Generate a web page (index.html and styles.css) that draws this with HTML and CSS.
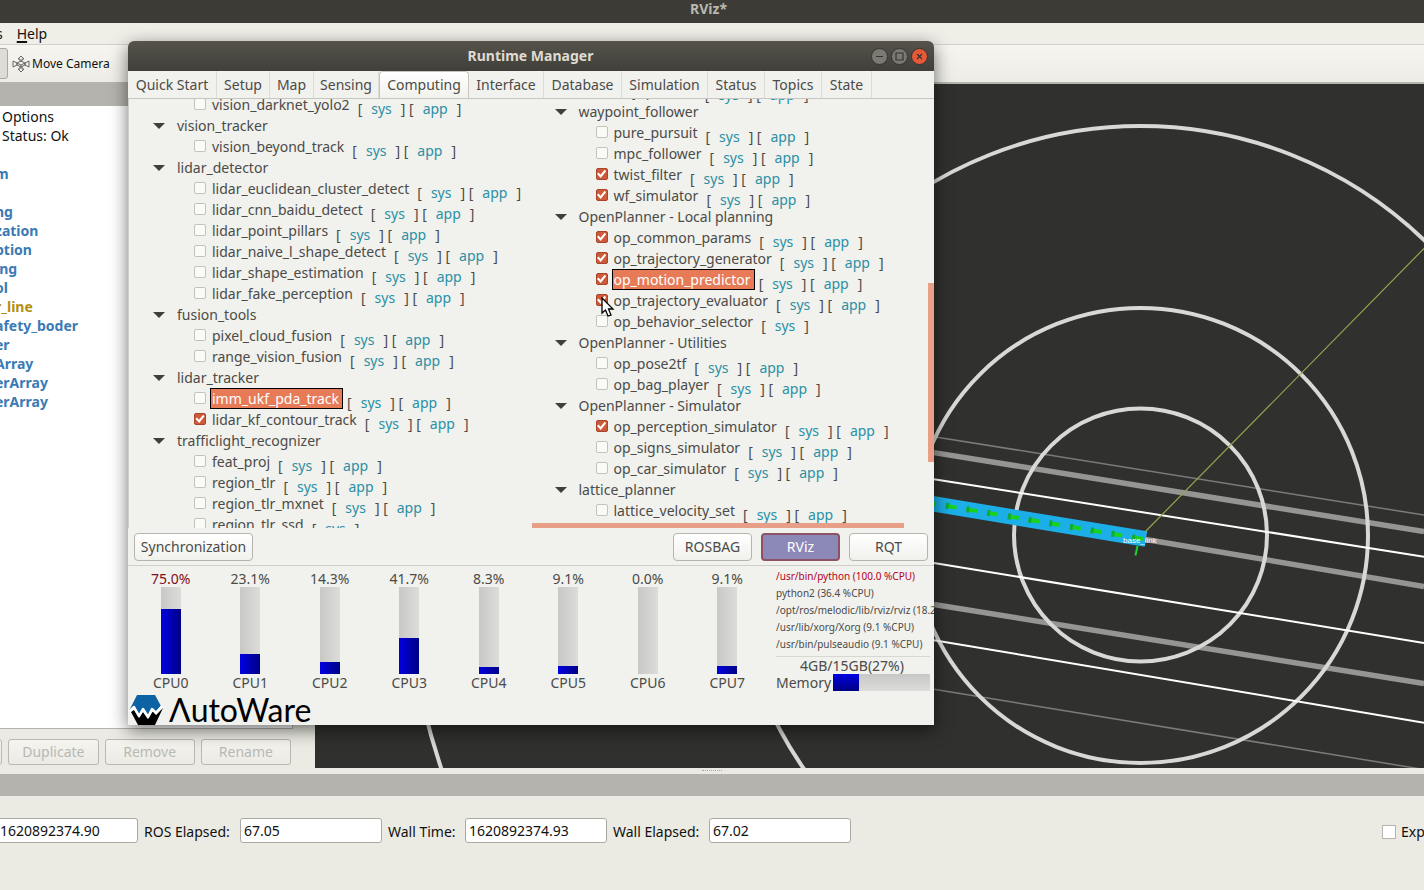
FILE: index.html
```html
<!DOCTYPE html>
<html lang="en">
<head>
<meta charset="utf-8">
<title>RViz*</title>
<link rel="stylesheet" href="styles.css">
</head>
<body>
<header class="desktop-title">RViz*</header>
<nav class="menubar"><a href="#panels">s</a><a href="#help"><u>H</u>elp</a></nav>
<div class="toolbar">
  <button class="tool-active" aria-label="Interact"></button>
  <button class="tool">
    <svg width="18" height="18" viewBox="0 0 18 18" fill="none" stroke="#666" stroke-width="1"><path d="M9 1L6 4H8V6H10V4H12ZM9 17L6 14H8V12H10V14H12ZM1 6V12L5 10V8ZM17 6V12L13 10V8ZM5 8L9 6L13 8V10L9 12L5 10ZM5 8L9 10L13 8M9 10V12"/></svg>
    Move Camera
  </button>
</div>
<main class="workspace">
  <section class="displays">
    <div class="dock-title"></div>
    <ul class="display-list">
      <li class="plain">Options</li>
      <li class="plain">Status: Ok</li>
      <li></li>
      <li>m</li>
      <li></li>
      <li>ng</li>
      <li>zation</li>
      <li>ption</li>
      <li>ing</li>
      <li>ol</li>
      <li class="warn">r_line</li>
      <li>afety_boder</li>
      <li>er</li>
      <li>Array</li>
      <li>erArray</li>
      <li>erArray</li>
    </ul>
    <div class="display-buttons">
      <button disabled aria-label="Add"></button>
      <button disabled>Duplicate</button>
      <button disabled>Remove</button>
      <button disabled>Rename</button>
    </div>
  </section>
  <section class="view3d">
    <svg width="100%" height="100%" role="img" aria-label="3D view">
      <g transform="translate(-315 -84)" fill="none">
        <g stroke="#7b7b7a" stroke-width="1.5">
          <path d="M934 436.7L1424 515M934 689.3L1424 769.5"/>
        </g>
        <g stroke="#959593" stroke-width="5.5">
          <path d="M934 452.6L1424 531.6M1140 538.5L1424 586.5M934 604.5L1424 683.5"/>
        </g>
        <g stroke="#d8d8d5" stroke-width="4">
          <circle cx="1140.5" cy="535" r="126.5"/>
          <circle cx="1140.5" cy="535.5" r="227.5"/>
          <circle cx="1140.5" cy="535.5" r="409.5"/>
          <circle cx="1140.5" cy="535.5" r="737"/>
        </g>
        <g stroke="#fff" stroke-width="2">
          <path d="M934 479.3L1424 556.7M934 563L1424 643M934 640.2L1424 722.7"/>
        </g>
        <path d="M926 502.7L1146 539" stroke="#1caee6" stroke-width="15.5"/>
        <path d="M1145 532L1424 248.5" stroke="#9ca250" stroke-width="1.2"/>
        <path d="M926 502.5L1146 539.5" stroke="#18d21c" stroke-width="4" stroke-dasharray="11 10" stroke-dashoffset="1"/>
        <path d="M926 502.5L1146 539.5" stroke="#12a83a" stroke-width="6" stroke-dasharray="3 18" stroke-dashoffset="1"/>
        <path d="M1137.500 546L1135.500 555.500" stroke="#19d52d" stroke-width="2"/>
        <text x="1123" y="543" class="frame-name">base_link</text>
      </g>
    </svg>
  </section>
</main>
<div class="splitter"><i></i></div>
<div class="dock-title"></div>
<footer class="times">
  <input id="ros-time" aria-label="ROS Time" value="1620892374.90">
  <label for="ros-el">ROS Elapsed:</label><input id="ros-el" value="67.05">
  <label for="wall">Wall Time:</label><input id="wall" value="1620892374.93">
  <label for="wall-el">Wall Elapsed:</label><input id="wall-el" value="67.02">
  <label class="experimental"><input type="checkbox">Exp</label>
</footer>

<section class="window">
  <header class="window-title">
    <h1>Runtime Manager</h1>
    <div class="controls">
      <button aria-label="Minimize"><svg viewBox="0 0 15 15"><path d="M4 7.500H11"/></svg></button>
      <button aria-label="Maximize"><svg viewBox="0 0 15 15"><path d="M4 4H11V11H4Z"/></svg></button>
      <button class="close" aria-label="Close"><svg viewBox="0 0 15 15"><path d="M5 5L10 10M10 5L5 10"/></svg></button>
    </div>
  </header>
  <nav class="tabs">
    <button>Quick Start</button><button>Setup</button><button>Map</button><button>Sensing</button><button class="current">Computing</button><button>Interface</button><button>Database</button><button>Simulation</button><button>Status</button><button>Topics</button><button>State</button>
  </nav>
  <div class="panes">
    <ul class="tree tree-left">
      <li><label><input type="checkbox"><span>vision_darknet_yolo2</span></label><span class="links">[<a href="#sys">sys</a>]&nbsp;[<a href="#app">app</a>]</span></li>
      <li class="group">vision_tracker</li>
      <li><label><input type="checkbox"><span>vision_beyond_track</span></label><span class="links">[<a href="#sys">sys</a>]&nbsp;[<a href="#app">app</a>]</span></li>
      <li class="group">lidar_detector</li>
      <li><label><input type="checkbox"><span>lidar_euclidean_cluster_detect</span></label><span class="links">[<a href="#sys">sys</a>]&nbsp;[<a href="#app">app</a>]</span></li>
      <li><label><input type="checkbox"><span>lidar_cnn_baidu_detect</span></label><span class="links">[<a href="#sys">sys</a>]&nbsp;[<a href="#app">app</a>]</span></li>
      <li><label><input type="checkbox"><span>lidar_point_pillars</span></label><span class="links">[<a href="#sys">sys</a>]&nbsp;[<a href="#app">app</a>]</span></li>
      <li><label><input type="checkbox"><span>lidar_naive_l_shape_detect</span></label><span class="links">[<a href="#sys">sys</a>]&nbsp;[<a href="#app">app</a>]</span></li>
      <li><label><input type="checkbox"><span>lidar_shape_estimation</span></label><span class="links">[<a href="#sys">sys</a>]&nbsp;[<a href="#app">app</a>]</span></li>
      <li><label><input type="checkbox"><span>lidar_fake_perception</span></label><span class="links">[<a href="#sys">sys</a>]&nbsp;[<a href="#app">app</a>]</span></li>
      <li class="group">fusion_tools</li>
      <li><label><input type="checkbox"><span>pixel_cloud_fusion</span></label><span class="links">[<a href="#sys">sys</a>]&nbsp;[<a href="#app">app</a>]</span></li>
      <li><label><input type="checkbox"><span>range_vision_fusion</span></label><span class="links">[<a href="#sys">sys</a>]&nbsp;[<a href="#app">app</a>]</span></li>
      <li class="group">lidar_tracker</li>
      <li><label><input type="checkbox"><span class="marked">imm_ukf_pda_track</span></label><span class="links">[<a href="#sys">sys</a>]&nbsp;[<a href="#app">app</a>]</span></li>
      <li><label><input type="checkbox" checked><span>lidar_kf_contour_track</span></label><span class="links">[<a href="#sys">sys</a>]&nbsp;[<a href="#app">app</a>]</span></li>
      <li class="group">trafficlight_recognizer</li>
      <li><label><input type="checkbox"><span>feat_proj</span></label><span class="links">[<a href="#sys">sys</a>]&nbsp;[<a href="#app">app</a>]</span></li>
      <li><label><input type="checkbox"><span>region_tlr</span></label><span class="links">[<a href="#sys">sys</a>]&nbsp;[<a href="#app">app</a>]</span></li>
      <li><label><input type="checkbox"><span>region_tlr_mxnet</span></label><span class="links">[<a href="#sys">sys</a>]&nbsp;[<a href="#app">app</a>]</span></li>
      <li><label><input type="checkbox"><span>region_tlr_ssd</span></label><span class="links">[<a href="#sys">sys</a>]</span></li>
    </ul>
    <ul class="tree tree-right">
      <li><label><input type="checkbox"><span>way_planner</span></label><span class="links">[<a href="#sys">sys</a>]&nbsp;[<a href="#app">app</a>]</span></li>
      <li class="group">waypoint_follower</li>
      <li><label><input type="checkbox"><span>pure_pursuit</span></label><span class="links">[<a href="#sys">sys</a>]&nbsp;[<a href="#app">app</a>]</span></li>
      <li><label><input type="checkbox"><span>mpc_follower</span></label><span class="links">[<a href="#sys">sys</a>]&nbsp;[<a href="#app">app</a>]</span></li>
      <li><label><input type="checkbox" checked><span>twist_filter</span></label><span class="links">[<a href="#sys">sys</a>]&nbsp;[<a href="#app">app</a>]</span></li>
      <li><label><input type="checkbox" checked><span>wf_simulator</span></label><span class="links">[<a href="#sys">sys</a>]&nbsp;[<a href="#app">app</a>]</span></li>
      <li class="group">OpenPlanner - Local planning</li>
      <li><label><input type="checkbox" checked><span>op_common_params</span></label><span class="links">[<a href="#sys">sys</a>]&nbsp;[<a href="#app">app</a>]</span></li>
      <li><label><input type="checkbox" checked><span>op_trajectory_generator</span></label><span class="links">[<a href="#sys">sys</a>]&nbsp;[<a href="#app">app</a>]</span></li>
      <li><label><input type="checkbox" checked><span class="marked">op_motion_predictor</span></label><span class="links">[<a href="#sys">sys</a>]&nbsp;[<a href="#app">app</a>]</span></li>
      <li><label><input type="checkbox" checked><span>op_trajectory_evaluator</span></label><span class="links">[<a href="#sys">sys</a>]&nbsp;[<a href="#app">app</a>]</span></li>
      <li><label><input type="checkbox"><span>op_behavior_selector</span></label><span class="links">[<a href="#sys">sys</a>]</span></li>
      <li class="group">OpenPlanner - Utilities</li>
      <li><label><input type="checkbox"><span>op_pose2tf</span></label><span class="links">[<a href="#sys">sys</a>]&nbsp;[<a href="#app">app</a>]</span></li>
      <li><label><input type="checkbox"><span>op_bag_player</span></label><span class="links">[<a href="#sys">sys</a>]&nbsp;[<a href="#app">app</a>]</span></li>
      <li class="group">OpenPlanner - Simulator</li>
      <li><label><input type="checkbox" checked><span>op_perception_simulator</span></label><span class="links">[<a href="#sys">sys</a>]&nbsp;[<a href="#app">app</a>]</span></li>
      <li><label><input type="checkbox"><span>op_signs_simulator</span></label><span class="links">[<a href="#sys">sys</a>]&nbsp;[<a href="#app">app</a>]</span></li>
      <li><label><input type="checkbox"><span>op_car_simulator</span></label><span class="links">[<a href="#sys">sys</a>]&nbsp;[<a href="#app">app</a>]</span></li>
      <li class="group">lattice_planner</li>
      <li><label><input type="checkbox"><span>lattice_velocity_set</span></label><span class="links">[<a href="#sys">sys</a>]&nbsp;[<a href="#app">app</a>]</span></li>
    </ul>
    <i class="scroll-y"></i><i class="scroll-x"></i>
  </div>
  <div class="actions">
    <button class="sync">Synchronization</button>
    <button>ROSBAG</button><button class="pressed">RViz</button><button>RQT</button>
  </div>
  <div class="status">
    <div class="cpus">
      <div class="cpu hot"><b>75.0%</b><div class="bar"><i style="height:75%"></i></div><span>CPU0</span></div>
      <div class="cpu"><b>23.1%</b><div class="bar"><i style="height:23.1%"></i></div><span>CPU1</span></div>
      <div class="cpu"><b>14.3%</b><div class="bar"><i style="height:14.3%"></i></div><span>CPU2</span></div>
      <div class="cpu"><b>41.7%</b><div class="bar"><i style="height:41.7%"></i></div><span>CPU3</span></div>
      <div class="cpu"><b>8.3%</b><div class="bar"><i style="height:8.3%"></i></div><span>CPU4</span></div>
      <div class="cpu"><b>9.1%</b><div class="bar"><i style="height:9.1%"></i></div><span>CPU5</span></div>
      <div class="cpu"><b>0.0%</b><div class="bar"><i style="height:0%"></i></div><span>CPU6</span></div>
      <div class="cpu"><b>9.1%</b><div class="bar"><i style="height:9.1%"></i></div><span>CPU7</span></div>
    </div>
    <div class="usage">
      <ul>
        <li class="alert">/usr/bin/python (100.0 %CPU)</li>
        <li>python2 (36.4 %CPU)</li>
        <li>/opt/ros/melodic/lib/rviz/rviz (18.2 %CPU)</li>
        <li>/usr/lib/xorg/Xorg (9.1 %CPU)</li>
        <li>/usr/bin/pulseaudio (9.1 %CPU)</li>
      </ul>
      <p>4GB/15GB(27%)</p>
      <div class="memory"><span>Memory</span><div><i style="width:27%"></i></div></div>
    </div>
  </div>
  <div class="brand">
    <svg width="36" height="30" viewBox="0 0 36 30">
      <path d="M9 0H27L33 11L27 17L24 14L20 20L15 14L11 20L6 12L1 16Z" fill="#0c62a3"/>
      <path d="M3 17L6 15L11 23L15 17L20 24L25 16L28 20L35 13L27 30H10Z" fill="#000"/>
      <path d="M1 17L6 12L11 21L15 14L20 22L24 14L28 18L34 11" fill="none" stroke="#fff" stroke-width="2.500" stroke-linejoin="round"/>
    </svg>
    <strong aria-label="AutoWare">ΛutoWare</strong>
  </div>
</section>
<svg class="pointer" width="14" height="21" viewBox="0 0 14 21"><path d="M1 1V16L4.500 13L7 19L10 18L7.500 12H12Z" fill="#fff" stroke="#000" stroke-width="1.300"/></svg>
</body>
</html>
```
FILE: styles.css
```css
* { box-sizing: border-box; }
body {
  margin: 0;
  height: 100vh;
  display: flex;
  flex-direction: column;
  overflow: hidden;
  position: relative;
  background: #ebebe3;
  color: #111;
  font: 14px/20px "Noto Sans", "Open Sans", sans-serif;
}
button, input { font: inherit; color: inherit; margin: 0; }
a { color: inherit; text-decoration: none; }
ul { list-style: none; margin: 0; padding: 0; }
i { display: block; }

.desktop-title {
  height: 23px;
  line-height: 18px;
  flex: none;
  padding-right: 7px;
  text-align: center;
  font-weight: 700;
  font-size: 14px;
  background: #3c3b36;
  color: #b9b7ae;
}
.menubar {
  height: 22px;
  line-height: 21px;
  flex: none;
  display: flex;
  gap: 14px;
  margin-left: -4px;
  border-bottom: 1px solid #d2d1c9;
  background: #efeee7;
}
.menubar u { text-decoration-thickness: 2px; text-underline-offset: 2px; }
.toolbar {
  height: 39px;
  flex: none;
  display: flex;
  align-items: center;
  background: linear-gradient(#f6f5f0, #edece5);
  border-bottom: 2px solid #b5b4ad;
}
.tool-active {
  width: 12px;
  height: 31px;
  margin-left: -6px;
  border: 1px solid #aaa9a2;
  border-radius: 3px;
  background: #dddcd5;
}
.tool {
  display: flex;
  align-items: center;
  gap: 2px;
  padding: 0 4px;
  border: 0;
  background: none;
  font-size: 12px;
}
.workspace { flex: 1; min-height: 0; display: flex; }
.displays { width: 315px; flex: none; display: flex; flex-direction: column; }
.dock-title { height: 22px; flex: none; background: #b4b3ad; }
.display-list {
  flex: 1;
  margin-right: 22px;
  padding-top: 1px;
  overflow: hidden;
  background: #fff;
  border: solid #b4b3ad;
  border-width: 0 1px 1px 0;
  color: #3a7ab5;
  font-weight: 700;
}
.display-list li { height: 19px; line-height: 19px; margin-left: -5px; }
.display-list .plain { margin-left: 2px; color: #111; font-weight: 400; }
.display-list .warn { color: #b38f10; }
.display-buttons {
  display: flex;
  gap: 6px;
  margin-left: -88px;
  padding: 10px 24px 3px 0;
}
.display-buttons button {
  flex: 1;
  height: 26px;
  padding: 0;
  border: 1px solid #b9b8b1;
  border-radius: 3px;
  background: linear-gradient(#f5f4f0, #ebeae4);
  color: #b9b9b4;
}
.view3d { flex: 1; min-width: 0; background: #30302e; overflow: hidden; }
.view3d svg { display: block; }
.frame-name { fill: #fff; font: 8px "Liberation Sans", sans-serif; }
.splitter { height: 6px; flex: none; padding-top: 2px; }
.splitter i { width: 20px; margin: 0 auto; border-top: 1px dotted #aaa; }
.times {
  height: 94px;
  flex: none;
  display: grid;
  grid-template-columns: 142px 90px 142px 71px 142px 90px 142px 1fr;
  gap: 6px;
  align-items: start;
  padding-top: 22px;
  margin-left: -4px;
  overflow: hidden;
  white-space: nowrap;
}
.times > label { line-height: 28px; }
.times > input {
  width: 100%;
  height: 25px;
  padding: 0 3px;
  border: 1px solid #aaa9a2;
  border-radius: 3px;
  background: #fff;
}
.times .experimental { justify-self: end; display: flex; align-items: center; gap: 5px; width: 42px; }
.experimental input {
  appearance: none;
  flex: none;
  width: 14px;
  height: 14px;
  border: 1px solid #b5b4ad;
  background: #fff;
}

.window {
  position: absolute;
  left: 128px;
  top: 41px;
  width: 806px;
  height: 684px;
  display: flex;
  flex-direction: column;
  overflow: hidden;
  border-radius: 6px 6px 0 0;
  background: #f1f1ed;
  color: #4b4b48;
  box-shadow: 0 5px 18px rgba(0, 0, 0, .55);
}
.window-title {
  height: 30px;
  flex: none;
  display: grid;
  grid-template-columns: 1fr auto 1fr;
  align-items: center;
  padding: 0 6px 0 5px;
  background: linear-gradient(#55534a, #403f3a);
  color: #dfdbd2;
}
.window-title h1 { grid-column: 2; margin: 0; font-size: 14px; font-weight: 700; }
.controls { justify-self: end; display: flex; gap: 3px; }
.controls button {
  width: 17px;
  height: 17px;
  padding: 0;
  border: 1px solid #35342f;
  border-radius: 50%;
  background: #7b7a72;
}
.controls svg { display: block; fill: none; stroke: #35342f; stroke-width: 1.2; }
.controls .close { background: #e5593a; }
.tabs {
  height: 28px;
  flex: none;
  display: grid;
  grid-template-columns: 89px 53px 44px 65px 90px 75px 78px 86px 57px 57px 50px;
  border-bottom: 1px solid #c6c5c0;
}
.tabs button {
  padding: 0;
  border: 0;
  border-right: 1px solid #dddcd7;
  background: none;
}
.tabs .current {
  border: 1px solid #c6c5c0;
  border-bottom: 0;
  border-radius: 4px 4px 0 0;
  background: linear-gradient(#fff, #f1f1ed);
}
.panes {
  flex: 1;
  min-height: 0;
  display: grid;
  grid-template-columns: 1fr 1fr;
  overflow: hidden;
  position: relative;
  border-left: 1px solid #cfcec9;
}
.tree { padding-left: 24px; }
.tree-left { margin-top: -5px; }
.tree-right { margin-top: -19px; padding-left: 23px; }
.tree li { height: 21px; display: flex; align-items: flex-start; padding-left: 41px; white-space: nowrap; }
.tree .group { align-items: center; gap: 12px; padding-left: 0; }
.group::before {
  content: "";
  border: solid transparent;
  border-width: 6px 6px 0;
  border-top-color: #3f3f3c;
}
.tree label { display: flex; align-items: flex-start; gap: 4px; }
.tree input {
  appearance: none;
  width: 12px;
  height: 12px;
  margin-top: 4px;
  border: 1px solid #c3c2bc;
  border-radius: 2px;
  background: #fafaf7;
}
.tree input:checked { border-color: #a8452a; background: #cf5a3a; }
.tree input:checked::before {
  content: "";
  display: block;
  height: 10px;
  background: #fff;
  clip-path: polygon(5% 50%, 20% 35%, 40% 58%, 82% 8%, 96% 22%, 42% 90%);
}
.tree label span { border: 1px solid transparent; padding: 0 3px 0 1px; line-height: 19px; }
.tree label .marked { border-color: #000; background: #e77b58; color: #fff; }
.links { padding: 5px 0 0 4px; }
.links a { padding: 0 9px; color: #2a90a5; }
.scroll-y, .scroll-x { position: absolute; background: #e89f88; }
.scroll-y { right: 0; top: 43%; width: 6px; height: 179px; }
.scroll-x { left: 50%; bottom: 0; width: 372px; height: 5px; }
.actions {
  flex: none;
  display: flex;
  gap: 9px;
  padding: 5px 6px 4px;
  border-bottom: 1px solid #cfcec9;
}
.actions button {
  width: 79px;
  height: 28px;
  padding: 0;
  border: 1px solid #b5b4ae;
  border-radius: 4px;
  background: linear-gradient(#fff, #f0f0ec);
}
.actions .sync { width: 119px; margin-right: auto; }
.actions .pressed { border: 2px solid #8d5264; background: #8c88b8; color: #fff; }
.status { flex: none; display: flex; }
.cpus { flex: 1; display: grid; grid-template-columns: repeat(8, 1fr); padding: 3px 9px 0 3px; }
.cpu { display: flex; flex-direction: column; align-items: center; line-height: 18px; }
.cpu b { font-weight: 400; height: 18px; line-height: 20px; }
.hot b { color: #7e1020; }
.bar { width: 20px; height: 87px; display: flex; align-items: flex-end; background: linear-gradient(90deg, #c8c8c6, #dcdcda); }
.bar i { width: 100%; background: linear-gradient(90deg, #0000e2, #000084); }
.usage { width: 158px; flex: none; padding-top: 2px; overflow: hidden; }
.usage ul { padding-bottom: 3px; margin-right: 4px; border-bottom: 1px solid #d8d7d2; }
.usage li { font-size: 10px; line-height: 17px; white-space: nowrap; }
.usage .alert { color: #b3001e; }
.usage p { margin: 0; padding-right: 6px; text-align: center; line-height: 17px; }
.memory { display: flex; line-height: 17px; padding-right: 4px; }
.memory span { width: 57px; }
.memory div { flex: 1; background: linear-gradient(#c8c8c6, #dcdcda); }
.memory i { height: 17px; background: linear-gradient(#0000e2, #000084); }
.brand { flex: none; display: flex; align-items: center; gap: 5px; height: 33px; padding-top: 3px; color: #000; }
.brand strong { font: 32px/30px Lato, sans-serif; }
.pointer { position: absolute; left: 601px; top: 297px; }
```
